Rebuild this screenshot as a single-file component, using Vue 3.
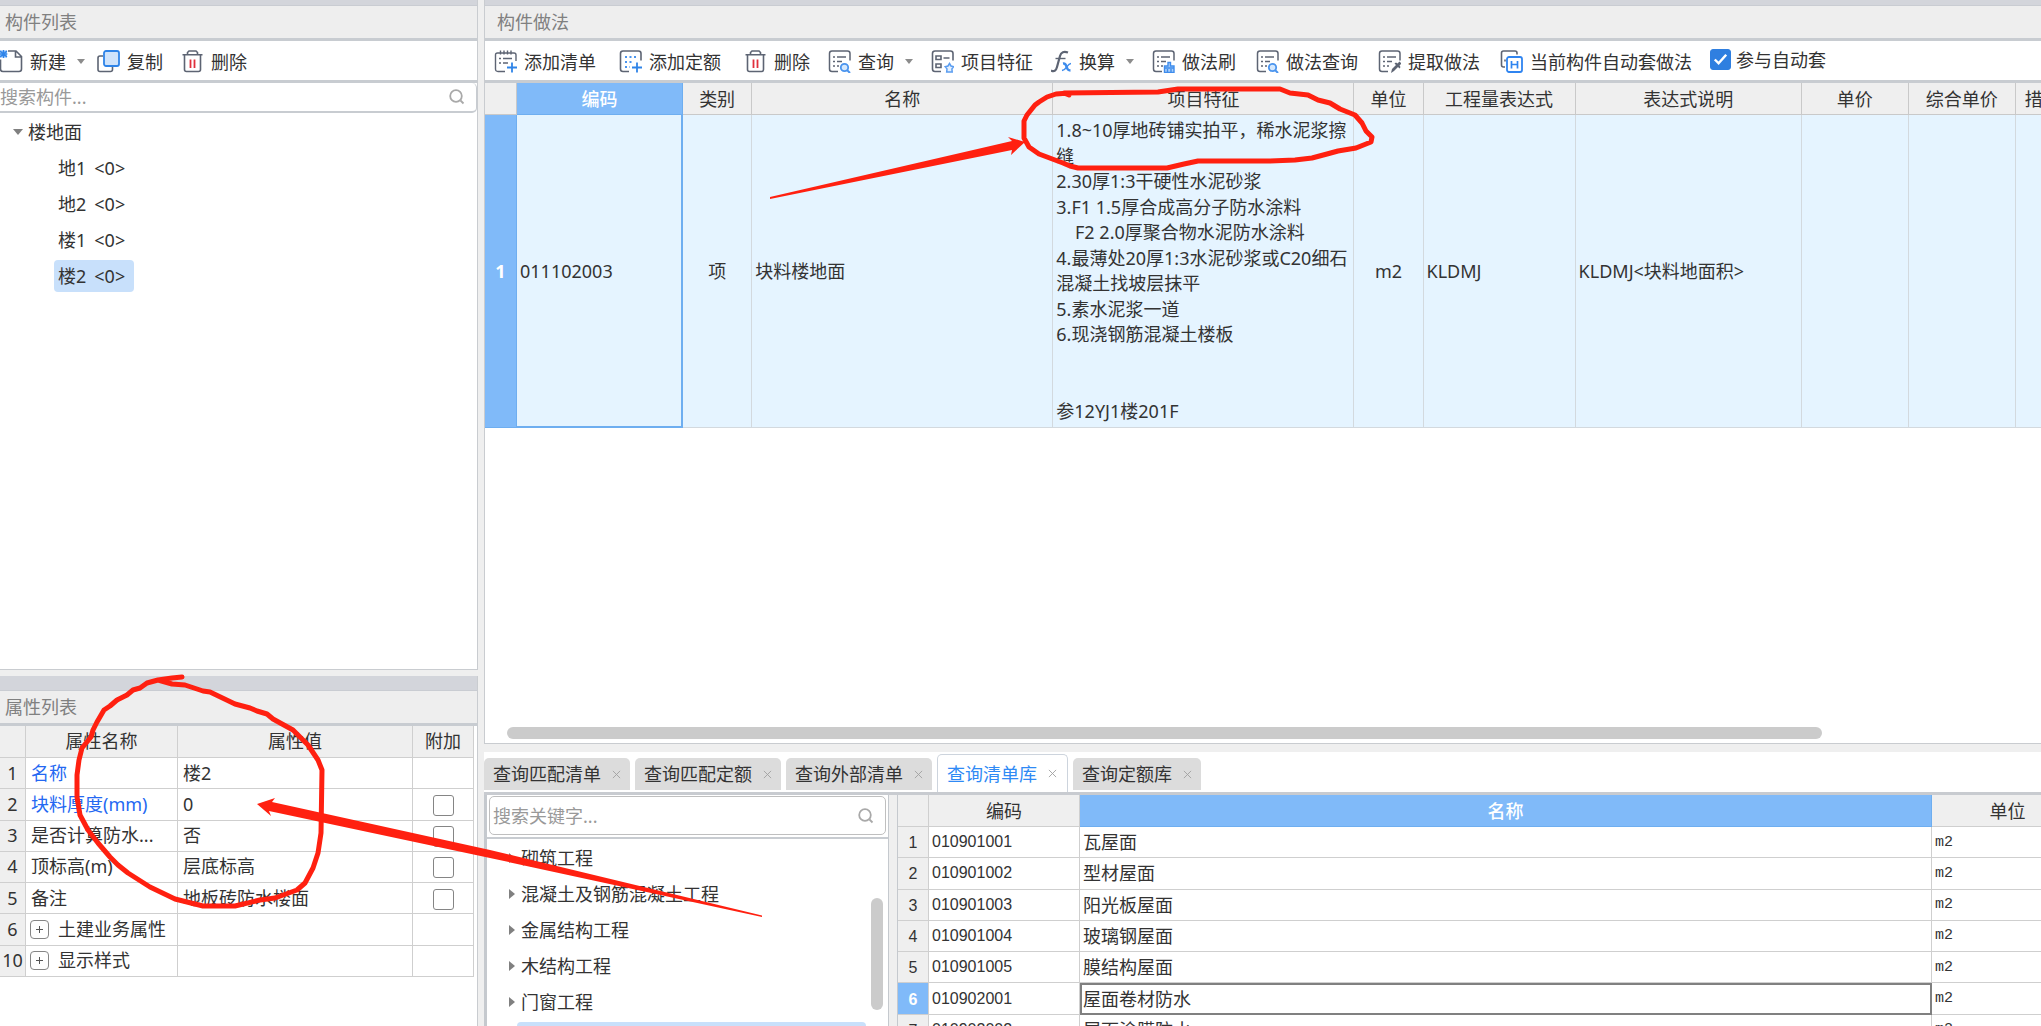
<script setup>
import { ref } from 'vue'

const components = [
  { name: '地1', count: '<0>' },
  { name: '地2', count: '<0>' },
  { name: '楼1', count: '<0>' },
  { name: '楼2', count: '<0>' }
]
const selectedComponent = ref(3)
const autoApply = ref(true)

const toolGroups = [
  [
    { label: '添加清单', icon: 'addList' },
    { label: '添加定额', icon: 'addQuota' },
    { label: '删除', icon: 'trash' }
  ],
  [
    { label: '查询', icon: 'query', menu: true },
    { label: '项目特征', icon: 'feature' },
    { label: '换算', icon: 'fx', menu: true }
  ],
  [
    { label: '做法刷', icon: 'brush' },
    { label: '做法查询', icon: 'query' },
    { label: '提取做法', icon: 'extract' },
    { label: '当前构件自动套做法', icon: 'auto' }
  ]
]

const properties = [
  { no: 1, name: '名称', value: '楼2', key: true },
  { no: 2, name: '块料厚度(mm)', value: '0', key: true, extra: true },
  { no: 3, name: '是否计算防水...', value: '否', extra: true },
  { no: 4, name: '顶标高(m)', value: '层底标高', extra: true },
  { no: 5, name: '备注', value: '地板砖防水楼面', extra: true },
  { no: 6, name: '土建业务属性', value: '', group: true },
  { no: 10, name: '显示样式', value: '', group: true }
]

const features = [
  '1.8~10厚地砖铺实拍平，稀水泥浆擦',
  '缝',
  '2.30厚1:3干硬性水泥砂浆',
  '3.F1 1.5厚合成高分子防水涂料',
  '    F2 2.0厚聚合物水泥防水涂料',
  '4.最薄处20厚1:3水泥砂浆或C20细石',
  '混凝土找坡层抹平',
  '5.素水泥浆一道',
  '6.现浇钢筋混凝土楼板',
  '',
  '',
  '参12YJ1楼201F'
]

const tabs = ['查询匹配清单', '查询匹配定额', '查询外部清单', '查询清单库', '查询定额库']
const activeTab = ref(3)

const chapters = ['砌筑工程', '混凝土及钢筋混凝土工程', '金属结构工程', '木结构工程', '门窗工程']

const bills = [
  ['010901001', '瓦屋面'],
  ['010901002', '型材屋面'],
  ['010901003', '阳光板屋面'],
  ['010901004', '玻璃钢屋面'],
  ['010901005', '膜结构屋面'],
  ['010902001', '屋面卷材防水'],
  ['010902002', '屋面涂膜防水']
]
const activeBill = ref(5)
</script>

<template>
  <div class="app">
    <svg class="defs" width="0" height="0" aria-hidden="true">
      <symbol id="trash" viewBox="0 0 23 23">
        <g fill="none" stroke="#5d6473" stroke-width="1.6">
          <path d="M1.5 4.8h20M6.5 4.5v-2l1.5-1.5h7l1.5 1.5v2M3.5 5v14.500q0 2 2 2h12q2 0 2-2V5" />
        </g>
        <path d="M9.500 9.500v8.500M13.500 9.500v8.500" stroke="#e0303c" stroke-width="1.8" />
      </symbol>
      <symbol id="addList" viewBox="0 0 23 23">
        <path d="M11 21.500H4q-2.500 0-2.500-2.500V5q0-2 2-2h16.500q2 0 2 2v6M6.500 0.500v4M10 0.500v4M13.500 0.500v4M17 0.500v4M5 8.500h2M9 8.500h9M5 13h2M9 13h5" fill="none" stroke="#5d6473" stroke-width="1.4" />
        <path d="M18 12.500v10M13 17.500h10" stroke="#2f84e8" stroke-width="1.8" />
      </symbol>
      <symbol id="addQuota" viewBox="0 0 23 23">
        <path d="M10 21.500H4q-2.500 0-2.500-2.500V3.500q0-2.500 2.500-2.500h15.500q2.500 0 2.500 2.500v7" fill="none" stroke="#5d6473" stroke-width="1.6" />
        <path d="M6 7h12M6 12h7M6 17h5" stroke="#4a94ee" stroke-width="2" stroke-dasharray="2 2.500" />
        <path d="M18 12.500v10M13 17.500h10" stroke="#2f84e8" stroke-width="1.8" />
      </symbol>
      <symbol id="sheet" viewBox="0 0 23 23">
        <path d="M10 21.500H4q-2.500 0-2.500-2.500V3.500q0-2.500 2.500-2.500h15.500q2.500 0 2.500 2.500v7M5 7h2M9 7h9M5 11.500h2M9 11.500h5M5 16h2M9 16h2" fill="none" stroke="#5d6473" stroke-width="1.5" />
      </symbol>
      <symbol id="query" viewBox="0 0 23 23">
        <use href="#sheet" width="23" height="23" />
        <circle cx="16.500" cy="17.500" r="3.700" fill="#d5e8fd" stroke="#4a94ee" stroke-width="1.800" />
        <path d="M19 20l3 3" stroke="#4a94ee" stroke-width="2" />
      </symbol>
      <symbol id="feature" viewBox="0 0 23 23">
        <path d="M10 21.500H4q-2.500 0-2.500-2.500V3.500q0-2.500 2.500-2.500h15.500q2.500 0 2.500 2.500v7M5 6h5v3.500H5zM5 14h5v3.500H5zM12.500 8h6" fill="none" stroke="#5d6473" stroke-width="1.600" />
        <path d="M18.500 13.500l1.500 2.500 2.700.7-1.800 2.200.3 3.100h-5.500l.3-3.100-1.800-2.200 2.800-.7z" fill="#e4f0fe" stroke="#5b9df0" stroke-width="1.500" />
      </symbol>
      <symbol id="fx" viewBox="0 0 21 23">
        <path d="M0 20.500c3 1.500 5 .5 6-3.500l3-11c1-4 4-5 8-3.500" fill="none" stroke="#5d6473" stroke-width="2.200" />
        <path d="M4.500 8.500h10" stroke="#5d6473" stroke-width="1.400" />
        <path d="M12 13.500q2.500-.5 3.500 3.200t4 3.800" fill="none" stroke="#3e8cec" stroke-width="2.400" />
        <path d="M20 13.500q-2 0-4 3.200t-5 3.800" fill="none" stroke="#3e8cec" stroke-width="1.400" />
      </symbol>
      <symbol id="brush" viewBox="0 0 23 23">
        <use href="#sheet" width="23" height="23" />
        <path d="M16 12.500h2.500v3.500H22v6.500H12.500V16H16zM12.500 18H22M15.500 19v3M19 19v3" fill="#a9cffb" stroke="#3e8cec" stroke-width="1.400" />
      </symbol>
      <symbol id="extract" viewBox="0 0 23 23">
        <use href="#sheet" width="23" height="23" />
        <path d="M13 23l1-4 4-4-1.500-1.500 1.500-1 1.500 1 2-2 2 2-2 2 1 1.500-1 1.500-1.500-1.500-4 4z" fill="#5d6473" />
      </symbol>
      <symbol id="auto" viewBox="0 0 23 23">
        <path d="M5 17H3.500Q1.500 17 1.500 15V3q0-2 2-2H15q2 0 2 2v1.500M5 6v.1M5 9.500v2" fill="none" stroke="#5d6473" stroke-width="1.600" />
        <rect x="7" y="7" width="15" height="15" rx="2" fill="#fff" stroke="#2f84f0" stroke-width="1.800" />
        <path d="M11.500 11v7.500M17.500 11v7.500M11.500 14.500h6" stroke="#2f84f0" stroke-width="1.700" fill="none" />
      </symbol>
      <symbol id="new" viewBox="0 0 23 23">
        <path d="M8 1h8l5.500 5.500V19q0 2.500-2.500 2.500H3Q.5 21.500.5 19V9.500M15.500 1v6h6" fill="none" stroke="#5d6473" stroke-width="1.600" />
        <path d="M0 .5h7v7H0z" fill="#7db5f8" />
        <path d="M0 1l7 6M0 7l7-6M3.500 0v8M0 4h7.500" stroke="#2f84e8" stroke-width="1.200" />
      </symbol>
      <symbol id="copy" viewBox="0 0 23 23">
        <path d="M6 6H3Q1 6 1 8v11.500q0 2 2 2h10.500q2 0 2-2V17" fill="none" stroke="#5d6473" stroke-width="1.600" />
        <rect x="7" y="1" width="15" height="15" rx="2" fill="#cfe3fb" stroke="#2f84e8" stroke-width="1.800" />
      </symbol>
      <symbol id="search" viewBox="0 0 16 16">
        <circle cx="7" cy="7" r="5.800" fill="none" stroke="#a9a9a9" stroke-width="1.800" />
        <path d="M11.500 11.500l3 3" stroke="#a9a9a9" stroke-width="1.800" />
      </symbol>
    </svg>

    <aside class="side">
      <section class="panel grow">
        <div class="band"></div>
        <h2 class="title">构件列表</h2>
        <div class="toolbar side-tools">
          <button class="tool menu"><svg class="icon"><use href="#new" /></svg>新建<i class="caret"></i></button>
          <button class="tool"><svg class="icon"><use href="#copy" /></svg>复制</button>
          <button class="tool"><svg class="icon"><use href="#trash" /></svg>删除</button>
        </div>
        <label class="search side-search">
          <input type="text" placeholder="搜索构件..." aria-label="搜索构件" />
          <svg><use href="#search" /></svg>
        </label>
        <ul class="tree">
          <li class="root">
            <i class="fold"></i>楼地面
          </li>
          <li v-for="(c, i) in components" :key="c.name" class="leaf">
            <button :class="{ on: i === selectedComponent }" @click="selectedComponent = i">
              <span>{{ c.name }}</span><span>{{ c.count }}</span>
            </button>
          </li>
        </ul>
      </section>

      <section class="panel props">
        <div class="band tall"></div>
        <h2 class="title">属性列表</h2>
        <div class="props-body">
          <table class="prop-table">
            <colgroup><col class="p-no" /><col class="p-name" /><col /><col class="p-add" /></colgroup>
            <thead>
              <tr><th></th><th>属性名称</th><th>属性值</th><th>附加</th></tr>
            </thead>
            <tbody>
              <tr v-for="p in properties" :key="p.no">
                <th scope="row">{{ p.no }}</th>
                <td :class="{ key: p.key }">
                  <div class="prop-name">
                    <button v-if="p.group" class="expand" :aria-label="'展开' + p.name"></button>{{ p.name }}
                  </div>
                </td>
                <td>{{ p.value }}</td>
                <td class="mid"><input v-if="p.extra" class="box" type="checkbox" :aria-label="'附加' + p.name" /></td>
              </tr>
            </tbody>
          </table>
        </div>
      </section>
    </aside>

    <main class="main">
      <section class="panel grow">
        <div class="band"></div>
        <h2 class="title inset">构件做法</h2>
        <div class="toolbar main-tools">
          <div v-for="(g, gi) in toolGroups" :key="gi" class="group" :class="'g' + gi">
            <button v-for="t in g" :key="t.label" class="tool" :class="{ menu: t.menu }">
              <svg class="icon" :class="{ slim: t.icon === 'fx' }"><use :href="'#' + t.icon" /></svg>{{ t.label }}<i v-if="t.menu" class="caret"></i>
            </button>
          </div>
          <label class="auto"><input v-model="autoApply" class="box" type="checkbox" />参与自动套</label>
        </div>
        <div class="method">
          <table class="method-table">
            <colgroup>
              <col class="m-no" /><col class="m-code" /><col class="m-kind" /><col class="m-wide" /><col class="m-wide" />
              <col class="m-kind" /><col class="m-expr" /><col class="m-desc" /><col class="m-price" /><col class="m-price" /><col class="m-last" />
            </colgroup>
            <thead>
              <tr>
                <th></th><th class="active">编码</th><th>类别</th><th>名称</th><th>项目特征</th><th>单位</th>
                <th>工程量表达式</th><th>表达式说明</th><th>单价</th><th>综合单价</th><th class="cut">措</th>
              </tr>
            </thead>
            <tbody>
              <tr>
                <th scope="row">1</th>
                <td class="current">011102003</td>
                <td class="mid">项</td>
                <td>块料楼地面</td>
                <td>
                  <div class="lines"><span v-for="(f, i) in features" :key="i">{{ f }}</span></div>
                </td>
                <td class="mid">m2</td>
                <td>KLDMJ</td>
                <td>KLDMJ&lt;块料地面积&gt;</td>
                <td></td><td></td><td></td>
              </tr>
            </tbody>
          </table>
          <div class="hscroll"><span></span></div>
        </div>
      </section>

      <section class="lookup">
        <nav class="tabs">
          <div v-for="(t, i) in tabs" :key="t" class="tab" :class="{ on: i === activeTab }">
            <button class="tab-name" @click="activeTab = i">{{ t }}</button>
            <button class="close" :aria-label="'关闭' + t">
              <svg viewBox="0 0 10 10"><path d="M1 1l8 8M9 1l-8 8" /></svg>
            </button>
          </div>
        </nav>
        <div class="lookup-body">
          <div class="chapters">
            <div class="search-wrap">
              <label class="search boxed">
                <input type="text" placeholder="搜索关键字..." aria-label="搜索关键字" />
                <svg><use href="#search" /></svg>
              </label>
            </div>
            <div class="chapter-area">
              <ul class="chapter-list">
                <li v-for="c in chapters" :key="c"><i class="closed"></i>{{ c }}</li>
                <li class="picked"></li>
              </ul>
              <div class="vscroll"></div>
            </div>
          </div>
          <div class="bills">
            <table class="bill-table">
              <colgroup><col class="b-no" /><col class="b-code" /><col /><col class="b-unit" /></colgroup>
              <thead>
                <tr><th></th><th>编码</th><th class="active">名称</th><th>单位</th></tr>
              </thead>
              <tbody>
                <tr v-for="(b, i) in bills" :key="b[0]" :class="{ on: i === activeBill }">
                  <th scope="row">{{ i + 1 }}</th>
                  <td class="code">{{ b[0] }}</td>
                  <td class="name">{{ b[1] }}</td>
                  <td class="unit">m2</td>
                </tr>
              </tbody>
            </table>
          </div>
        </div>
      </section>
    </main>

    <svg class="marks" width="2041" height="1026" viewBox="0 0 2041 1026" aria-hidden="true">
      <g fill="none" stroke="#ff2010" stroke-width="5" stroke-linejoin="round" stroke-linecap="round">
        <path d="M1069 95L1064 93L1158 92L1178 89L1280 89L1290 93L1308 95L1318 100L1330 103L1340 109L1355 115L1362 123L1366 131L1372 137L1371 142L1356 148L1338 151L1327 154L1312 158L1295 160L1270 161L1198 161L1184 164L1167 168L1078 168L1070 166L1063 163L1039 154L1029 147L1024 138L1024 121L1027 115L1031 110L1035 105L1039 102L1047 97L1056 94L1069 93" />
        <path d="M182 677L172 678L158 680L147 683L140 688L133 690L127 695L117 700L110 706L104 710L97 722L93 730L91 737L82 748L79 760L77 775L77 797L80 815L88 830L98 843L110 857L118 865L128 873L150 887L175 899L203 906L235 906L260 900L275 898L297 890L305 883L313 868L318 853L321 833L322 770L318 760L308 745L293 730L273 719L267 714L257 711L250 708L235 704L210 692L203 691L185 685L172 684L158 680" />
      </g>
      <g fill="#ff2010">
        <path d="M770 197L1012 141L1008 137L1025 142L1011 155L1012 150L770 199z" />
        <path d="M257 804L275 798L272 802L490 850L762 915.500L762 917L490 858L269 811L271 816z" />
      </g>
    </svg>
  </div>
</template>

<style>
body {
  margin: 0;
  overflow: hidden;
}
</style>

<style scoped>
.app {
  position: relative;
  display: flex;
  gap: 6px;
  height: 100vh;
  overflow: hidden;
  background: #efefef;
  color: #333;
  font: 18px/24px "Noto Sans", "Noto Sans CJK SC", sans-serif;
}
.defs { position: absolute; }
button {
  padding: 0;
  border: 0;
  background: none;
  color: inherit;
  font: inherit;
  white-space: nowrap;
}
ul { margin: 0; padding: 0; list-style: none; }
table { border-collapse: separate; border-spacing: 0; table-layout: fixed; }
th, td { padding: 0; font-weight: 400; white-space: nowrap; overflow: hidden; box-sizing: border-box; }
.mid { text-align: center; }

.side { display: flex; flex-direction: column; gap: 6px; flex: 0 0 478px; min-width: 0; }
.main { display: flex; flex-direction: column; gap: 8px; flex: 1; min-width: 0; }
.panel {
  display: flex;
  flex-direction: column;
  box-sizing: border-box;
  border-right: 1px solid #c9ccd0;
  border-bottom: 1px solid #c9ccd0;
  background: #fff;
  min-height: 0;
}
.main .panel { border-right: 0; border-left: 1px solid #c9ccd0; }
.grow { flex: 1; overflow: hidden; }
.band { flex: none; height: 5px; background: #d3d5db; border-bottom: 1px solid #c9ccd2; }
.band.tall { height: 14px; }
.title {
  flex: none;
  margin: 0;
  padding-left: 5px;
  height: 32px;
  border-bottom: 3px solid #c8ccd1;
  background: #eee;
  color: #808080;
  font-size: 18px;
  font-weight: 400;
  line-height: 32px;
}
.title.inset { padding-left: 12px; }

.toolbar {
  display: flex;
  align-items: center;
  flex: none;
  height: 37px;
  padding-top: 2px;
  border-bottom: 3px solid #c8ccd1;
}
.side-tools { gap: 18px; }
.main-tools { gap: 18px; padding-left: 9px; white-space: nowrap; }
.group { display: flex; }
.g0 { gap: 23px; }
.g1 { gap: 18px; }
.g2 { gap: 20px; }
.tool { display: flex; align-items: center; gap: 7px; line-height: 36px; }
.side-tools .menu { margin-right: -6px; }
.icon { width: 23px; height: 23px; flex: none; }
.icon.slim { width: 21px; }
.caret {
  border: 4px solid transparent;
  border-top: 5px solid #8c8c8c;
  border-bottom: 0;
  margin-left: 4px;
}
.box {
  appearance: none;
  width: 21px;
  height: 21px;
  margin: 0;
  border: 1px solid #858585;
  border-radius: 3px;
  background: #fff;
  vertical-align: middle;
}
.auto { display: flex; align-items: center; gap: 5px; padding-bottom: 4px; }
.auto .box:checked {
  border-color: #2f7fe0;
  background: #2f7fe0 url("data:image/svg+xml,%3Csvg xmlns='http://www.w3.org/2000/svg' viewBox='0 0 20 20'%3E%3Cpath d='M4 10l4 4 8-9' fill='none' stroke='white' stroke-width='2.6'/%3E%3C/svg%3E") center / 19px no-repeat;
}

.search { display: flex; align-items: center; flex: none; box-sizing: border-box; background: #fff; }
.search input {
  flex: 1;
  min-width: 0;
  padding: 0;
  border: 0;
  outline: 0;
  background: none;
  font: inherit;
  color: #333;
}
.search input::placeholder { color: #999; opacity: 1; }
.search svg { width: 16px; height: 16px; margin-right: 11px; }
.side-search { height: 30px; border: 1px solid #c8ccd1; border-top: 0; border-left: 0; border-bottom-width: 2px; border-radius: 0 5px 5px 0; }
.boxed { height: 39px; padding-left: 3px; border: 1px solid #bfbfbf; border-radius: 5px; }

.root { display: flex; align-items: center; gap: 5px; height: 36px; padding-left: 13px; }
.fold { border: 5px solid transparent; border-top: 6px solid #808080; border-bottom: 0; }
.tree { padding-top: 1px; }
.leaf { display: flex; align-items: center; height: 36px; padding-left: 54px; }
.leaf button { display: flex; gap: 8px; padding: 0 9px 0 4px; border-radius: 4px; line-height: 32px; }
.leaf .on { background: #c8e0fb; }

.props { flex: 0 0 350px; border-bottom: 0; overflow: hidden; }
.props-body { padding-right: 3px; }
.prop-table { width: 100%; height: 251px; }
.prop-table th, .prop-table td { border-right: 1px solid #cfcfcf; border-bottom: 1px solid #cfcfcf; line-height: 29px; }
.prop-table th { background: #efefef; }
.prop-table thead th, .bill-table thead th { height: 32px; }
.prop-table td { padding-left: 5px; }
.prop-table td.mid { padding: 0; line-height: 20px; }
.p-no { width: 26px; }
.p-name { width: 152px; }
.p-add { width: 61px; }
.key { color: #2468f2; }
.prop-name { display: flex; align-items: center; gap: 9px; }
.expand {
  width: 19px;
  height: 19px;
  margin-left: -1px;
  border: 1px solid #858585;
  border-radius: 4px;
  background: linear-gradient(#555, #555) center / 7px 1px no-repeat, linear-gradient(#555, #555) center / 1px 7px no-repeat;
}

.method { display: flex; flex-direction: column; justify-content: space-between; flex: 1; overflow: hidden; }
.method-table { width: 1609px; }
.method-table th, .method-table td { border-right: 1px solid #c9c9c9; border-bottom: 1px solid #c9c9c9; }
.method-table thead th { height: 32px; background: #efefef; line-height: 30px; }
.method-table td { height: 313px; padding-left: 3px; border-color: #d3d9de; background: #e5f4ff; }
.method-table td.mid { padding: 0; }
.method-table thead .active, .bill-table .active { background: #80baf9; border-color: #6eaef0; color: #fff; font-weight: 500; }
.method-table tbody th { background: #80baf9; border-color: #6eaef0; color: #fff; font-weight: 700; }
.method-table .current { border-right: 2px solid #6eaef0; border-bottom: 2px solid #6eaef0; }
.method-table .cut { padding-left: 9px; text-align: left; text-overflow: clip; }
.m-no { width: 32px; }
.m-code { width: 166px; }
.m-kind { width: 69px; }
.m-wide { width: 301px; }
.m-expr { width: 152px; }
.m-desc { width: 226px; }
.m-price { width: 107px; }
.m-last { width: 78px; }
.lines { display: flex; flex-direction: column; height: 306px; }
.lines span { flex: 1; white-space: pre; }
.hscroll { padding: 0 219px 4px 22px; }
.hscroll span { display: block; height: 12px; border-radius: 6px; background: #cbcbcb; }

.lookup { display: flex; flex-direction: column; flex: 0 0 274px; min-height: 0; background: #fff; overflow: hidden; }
.tabs { display: flex; align-items: flex-end; gap: 5px; flex: none; height: 40px; border-bottom: 3px solid #c8cbd0; }
.tab {
  display: flex;
  align-items: center;
  gap: 11px;
  box-sizing: border-box;
  height: 32px;
  margin-bottom: 2px;
  padding: 0 9px;
  border-radius: 5px 5px 0 0;
  background: #dcdcdc;
}
.tab.on { height: 38px; margin-bottom: 0; padding: 0 10px 0 9px; border: 1px solid #cdd4dd; border-bottom: 0; background: #fff; color: #2f8af5; }
.tab-name { line-height: 30px; }
.close { display: flex; }
.close svg { width: 9px; height: 9px; stroke: #a0a0a0; fill: none; }
.lookup-body { display: flex; gap: 8px; flex: 1; min-height: 0; background: #efefef; }
.chapters {
  display: flex;
  flex-direction: column;
  flex: 0 0 405px;
  box-sizing: border-box;
  border-left: 3px solid #c5c9ce;
  border-right: 1px solid #c5c9ce;
  background: #fff;
}
.search-wrap { flex: none; padding: 1px 2px 2px; border-bottom: 2px solid #c8ccd1; }
.chapter-area { display: flex; justify-content: space-between; flex: 1; min-height: 0; padding: 1px 5px 0 0; overflow: hidden; }
.chapter-list { flex: none; width: 379px; }
.chapter-list li { display: flex; align-items: center; gap: 6px; height: 36px; padding-left: 22px; }
.closed { border: 5px solid transparent; border-left: 6px solid #808080; border-right: 0; }
.chapter-list li.picked { margin: 2px 0 0 30px; padding: 0; border-radius: 4px; background: #c8e0fb; }
.vscroll { width: 12px; height: 112px; margin-top: 58px; border-radius: 6px; background: #cbcbcb; }

.bills { flex: 1; min-width: 0; overflow: hidden; background: #fff; border-left: 1px solid #c5c9ce; }
.bill-table { width: calc(100% + 43px); height: 251px; }
.bill-table th, .bill-table td { border-right: 1px solid #cfcfcf; border-bottom: 1px solid #cfcfcf; line-height: 28px; }
.bill-table th { background: #efefef; }
.bill-table tbody th { padding-top: 2px; font-family: "Liberation Sans", sans-serif; font-size: 16px; }
.bill-table td { padding-left: 3px; }
.bill-table .code { font-family: "Liberation Sans", sans-serif; font-size: 16px; }
.bill-table .unit { padding-top: 1px; font-family: "Liberation Mono", monospace; font-size: 15px; }
.b-no { width: 31px; }
.b-code { width: 151px; }
.b-unit { width: 152px; }
.bill-table .on th { background: #80baf9; color: #fff; font-weight: 700; }
.bill-table .on .name { padding: 0 0 0 1px; border: 2px solid #808080; line-height: 26px; }

.marks { position: absolute; top: 0; left: 0; pointer-events: none; }
</style>
